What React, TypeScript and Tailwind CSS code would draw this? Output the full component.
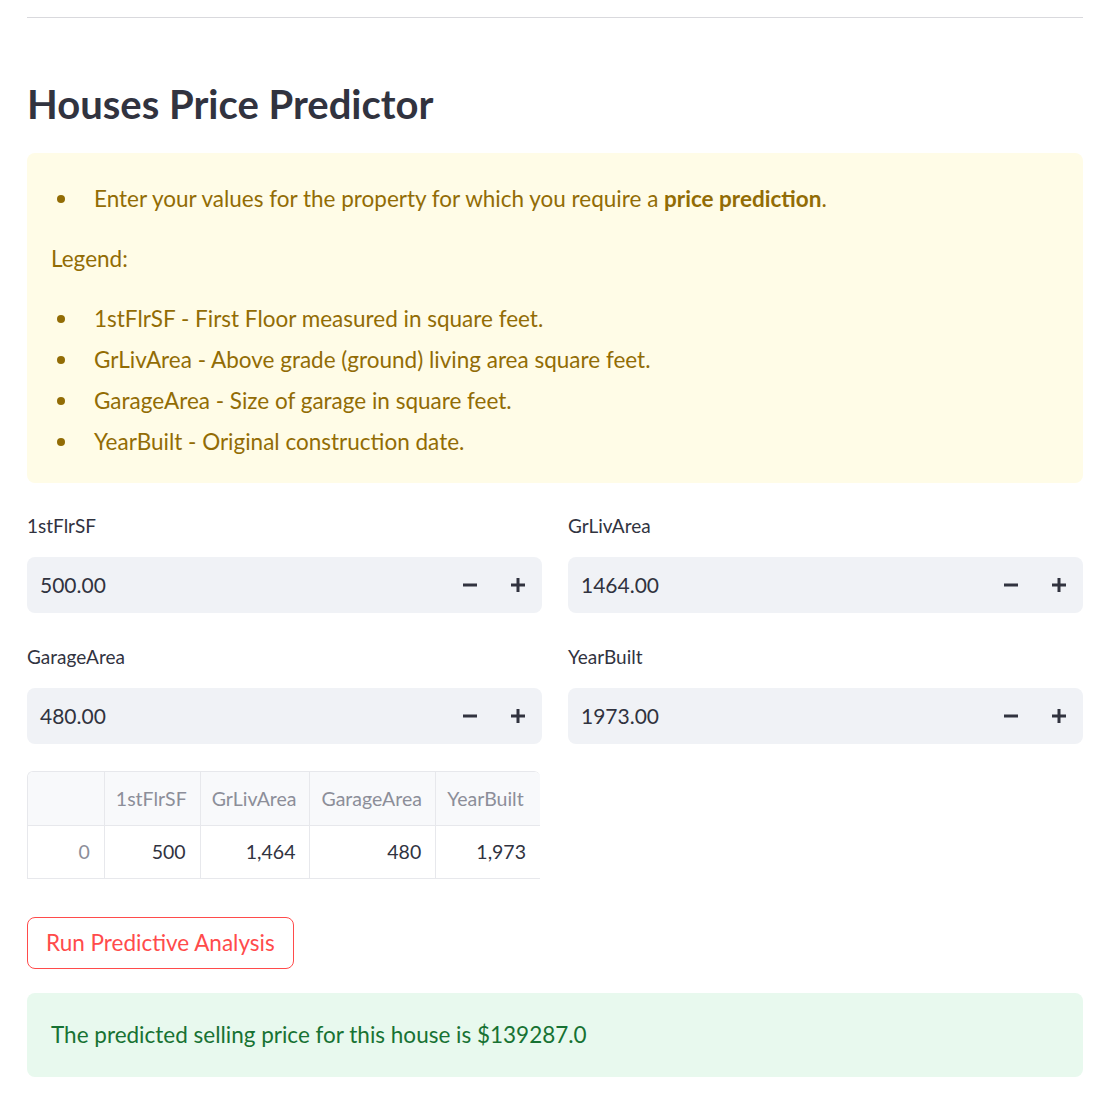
const font = "font-['Lato','Liberation_Sans',sans-serif]";

function Minus() {
  return (
    <svg width="14" height="14" viewBox="0 0 14 14" className="block">
      <rect x="0" y="5.5" width="14" height="3" fill="#31333F" />
    </svg>
  );
}

function Plus() {
  return (
    <svg width="14" height="14" viewBox="0 0 14 14" className="block">
      <rect x="0" y="5.5" width="14" height="3" fill="#31333F" />
      <rect x="5.5" y="0" width="3" height="14" fill="#31333F" />
    </svg>
  );
}

function NumberInput({ label, value }: { label: string; value: string }) {
  return (
    <div className="flex flex-col">
      <div className="h-6 mb-[19px] flex items-center text-[19px] text-[#31333F]">{label}</div>
      <div className="h-[56px] rounded-lg bg-[#F0F2F6] flex items-center pl-[13px] pr-[7px]">
        <span className="flex-1 text-[21px] text-[#31333F]">{value}</span>
        <button className="w-[34px] h-full flex items-center justify-center"><Minus /></button>
        <button className="ml-[14px] w-[34px] h-full flex items-center justify-center"><Plus /></button>
      </div>
    </div>
  );
}

const cols = [
  { name: "", w: "w-[77px]", v: "0" },
  { name: "1stFlrSF", w: "w-[96px]", v: "500" },
  { name: "GrLivArea", w: "w-[110px]", v: "1,464" },
  { name: "GarageArea", w: "w-[126px]", v: "480" },
  { name: "YearBuilt", w: "w-[104px]", v: "1,973" },
];

const legend = [
  "1stFlrSF - First Floor measured in square feet.",
  "GrLivArea - Above grade (ground) living area square feet.",
  "GarageArea - Size of garage in square feet.",
  "YearBuilt - Original construction date.",
];

function Bullet({ children }: { children: React.ReactNode }) {
  return (
    <li className="flex items-center h-[34px]">
      <span className="w-[67px] flex justify-center pl-[1px]">
        <span className="w-[8px] h-[8px] rounded-full bg-[#926C05]" />
      </span>
      <span>{children}</span>
    </li>
  );
}

export default function App() {
  return (
    <div className={`bg-white pl-[27px] pr-[15px] pb-4 ${font}`}>
      <div className="pt-[17px]">
        <div className="h-px bg-[#D9D9DD]" />
      </div>

      <h1 className="mt-[62px] text-[40px] leading-[48px] font-bold text-[#31333F]">Houses Price Predictor</h1>

      <div className="mt-[25px] rounded-lg bg-[#FFFCE7] text-[#926C05] text-[22.5px] pt-[29px] pb-[24px] pl-0 pr-6">
        <ul>
          <Bullet>
            Enter your values for the property for which you require a <b className="font-bold">price prediction</b>.
          </Bullet>
        </ul>
        <p className="pl-6 mt-[26px] h-[34px] flex items-center">Legend:</p>
        <ul className="mt-[26px] flex flex-col gap-[7px]">
          {legend.map((l) => (
            <Bullet key={l}>{l}</Bullet>
          ))}
        </ul>
      </div>

      <div className="mt-[31px] grid grid-cols-2 gap-x-[26px] gap-y-[32px]">
        <NumberInput label="1stFlrSF" value="500.00" />
        <NumberInput label="GrLivArea" value="1464.00" />
        <NumberInput label="GarageArea" value="480.00" />
        <NumberInput label="YearBuilt" value="1973.00" />
      </div>

      <div className="mt-[27px] w-[513px] rounded-t-md border-l border-t border-[#E7E8EC] overflow-hidden text-[19.5px]">
        <div className="flex h-[54px] bg-[#F8F9FB] border-b border-[#E7E8EC]">
          {cols.map((c, i) => (
            <div
              key={i}
              className={`${c.w} ${i < cols.length - 1 ? "border-r border-[#E7E8EC]" : ""} flex items-center pl-[11px] text-[#8C8E99]`}
            >
              {c.name}
            </div>
          ))}
        </div>
        <div className="flex h-[53px] border-b border-[#E7E8EC]">
          {cols.map((c, i) => (
            <div
              key={i}
              className={`${c.w} ${i < cols.length - 1 ? "border-r border-[#E7E8EC]" : ""} flex items-center justify-end pr-[14px] ${i === 0 ? "text-[#8C8E99]" : "text-[#31333F]"}`}
            >
              {c.v}
            </div>
          ))}
        </div>
      </div>

      <button className="mt-[38px] h-[52px] px-[18px] rounded-lg border border-[#FF4B4B] text-[#FF4B4B] text-[22.5px] bg-white">
        Run Predictive Analysis
      </button>

      <div className="mt-[24px] h-[84px] rounded-lg bg-[#E8F9EE] text-[#177233] text-[22.5px] flex items-center pl-6">
        The predicted selling price for this house is $139287.0
      </div>
    </div>
  );
}
